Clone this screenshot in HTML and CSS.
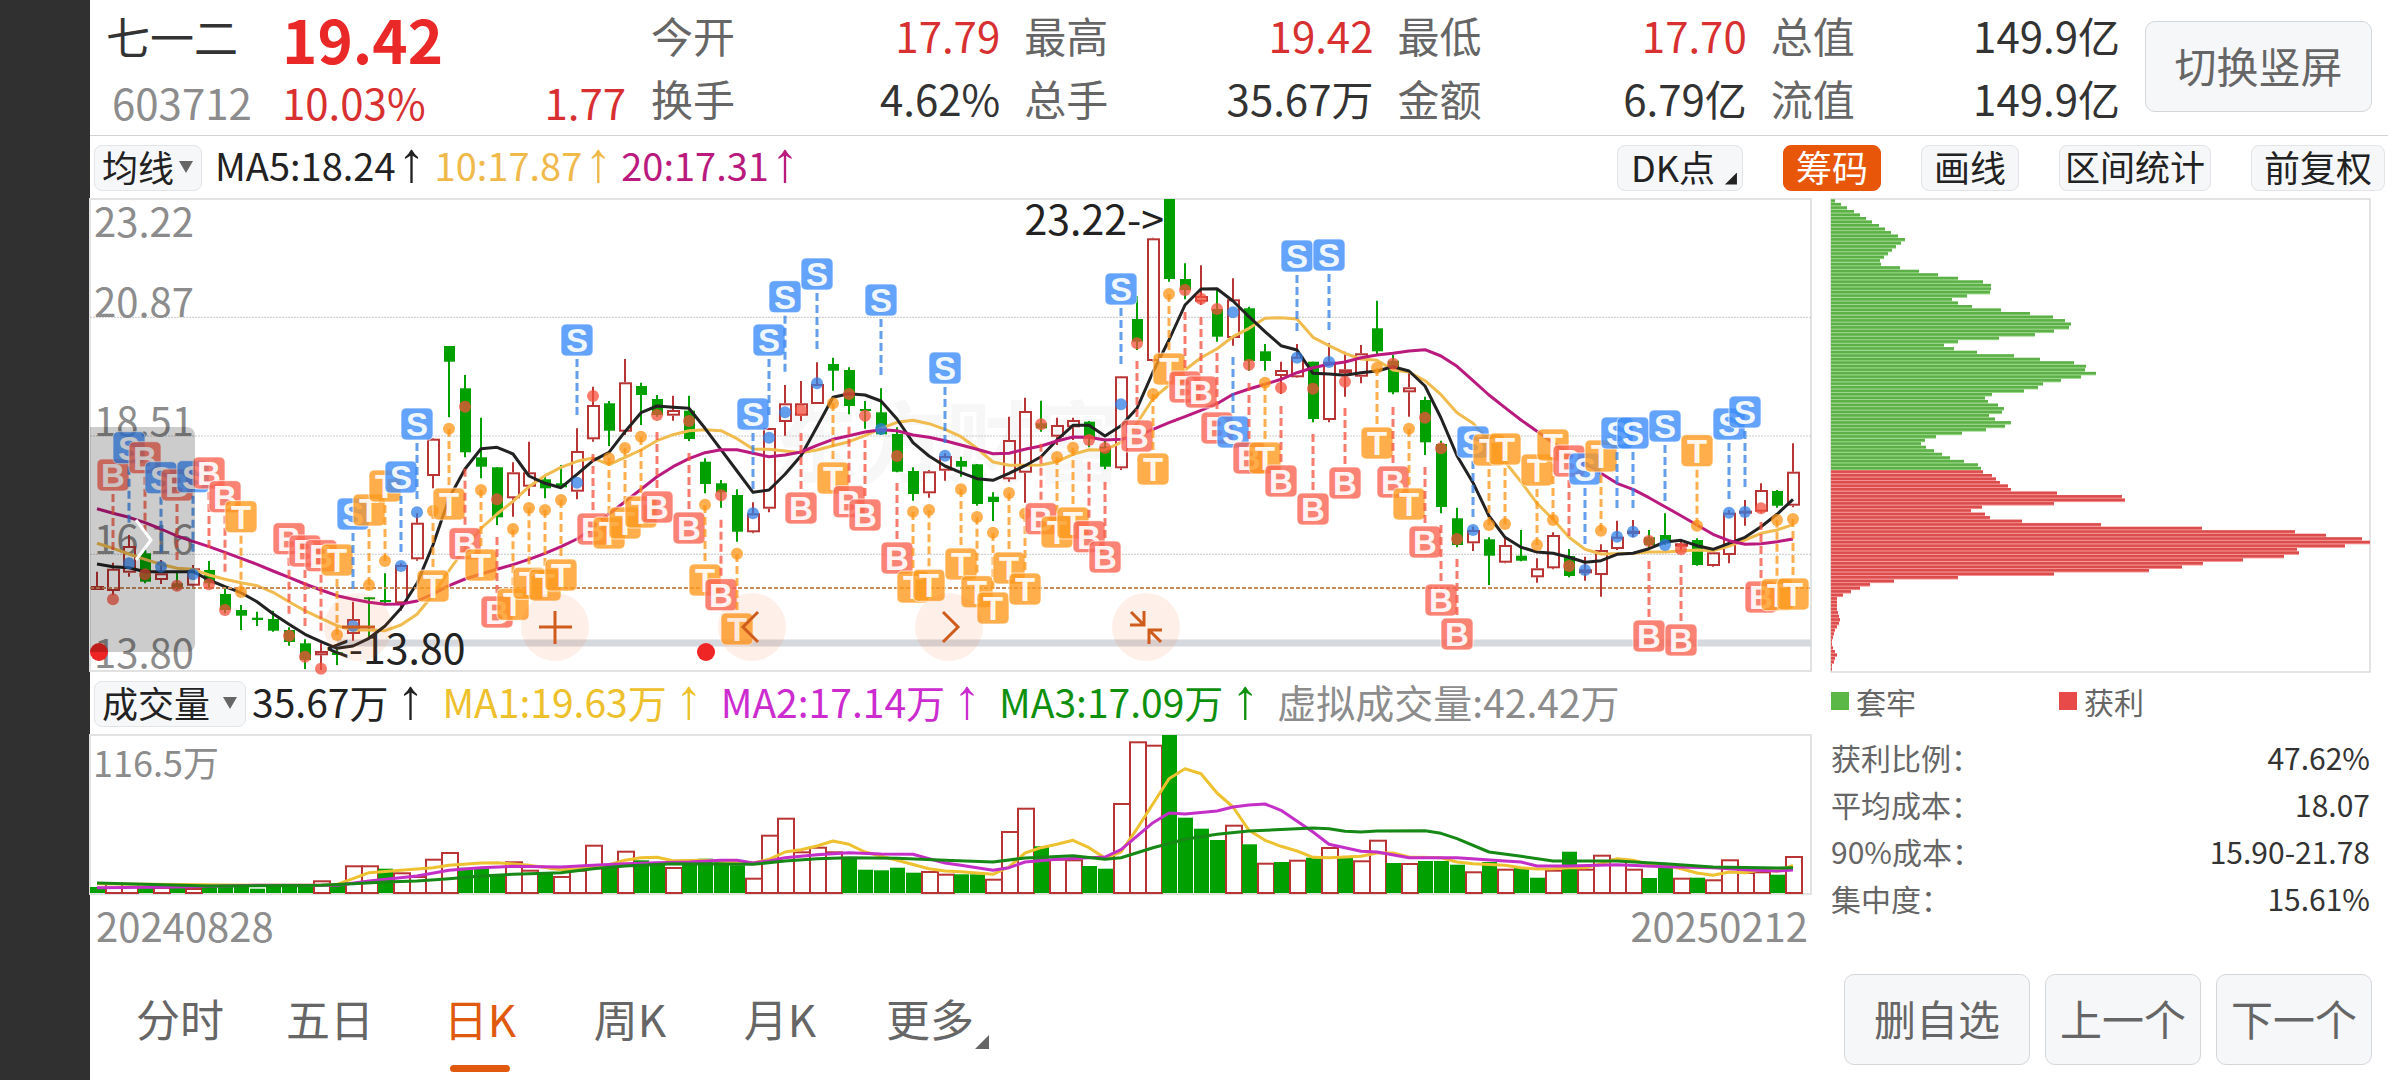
FILE: index.html
```html
<!DOCTYPE html>
<html lang="zh-CN">
<head>
<meta charset="utf-8">
<meta name="viewport" content="width=device-width, initial-scale=1">
<title>七一二 603712</title>
<link rel="stylesheet" href="styles.css">
</head>
<body>
<div class="app">
  <header class="header">
    <div class="identity">
      <h1 class="stock-name">七一二</h1>
      <strong class="price">19.42</strong>
      <span class="stock-code">603712</span>
      <span class="change"><span>10.03%</span><span>1.77</span></span>
    </div>
    <dl class="quotes">
      <div><dt>今开</dt><dd class="up">17.79</dd></div>
      <div><dt>最高</dt><dd class="up">19.42</dd></div>
      <div><dt>最低</dt><dd class="up">17.70</dd></div>
      <div><dt>总值</dt><dd>149.9亿</dd></div>
      <div><dt>换手</dt><dd>4.62%</dd></div>
      <div><dt>总手</dt><dd>35.67万</dd></div>
      <div><dt>金额</dt><dd>6.79亿</dd></div>
      <div><dt>流值</dt><dd>149.9亿</dd></div>
    </dl>
    <button class="big-button" type="button">切换竖屏</button>
  </header>

  <div class="toolbar">
    <span class="picker picker-ma">
      <select aria-label="主图指标"><option>均线</option></select>
    </span>
    <p class="legend-line">
      <span class="ma5">MA5:18.24<i class="arrow">↑</i></span>
      <span class="ma10">10:17.87<i class="arrow">↑</i></span>
      <span class="ma20">20:17.31<i class="arrow">↑</i></span>
    </p>
    <div class="tools">
      <button class="tool tool-corner" type="button">DK点</button>
      <button class="tool tool-active" type="button">筹码</button>
      <button class="tool" type="button">画线</button>
      <button class="tool tool-tight" type="button">区间统计</button>
      <button class="tool" type="button">前复权</button>
    </div>
  </div>

  <main class="board">
    <section class="charts">
      <div class="kline">
        <svg id="kline" class="kline-svg" viewBox="0 0 1722 473" role="img" aria-label="日K线"></svg>
        <button class="drawer" type="button" aria-label="展开">
          <svg viewBox="0 0 20 44" width="20" height="44"><path d="M2 2 17 22 2 42" fill="none" stroke="#fff" stroke-width="3"/></svg>
        </button>
        <div class="controls">
          <button type="button" aria-label="缩小"><svg viewBox="0 0 34 34"><path d="M1 17h33"/></svg></button>
          <button type="button" aria-label="放大"><svg viewBox="0 0 34 34"><path d="M1 17h33M17 1v33"/></svg></button>
          <button type="button" aria-label="左移"><svg viewBox="0 0 34 34"><path d="M23 2 8 17 23 32"/></svg></button>
          <button type="button" aria-label="右移"><svg viewBox="0 0 34 34"><path d="M11 2 26 17 11 32"/></svg></button>
          <button type="button" aria-label="退出全屏"><svg viewBox="0 0 34 34"><path d="M2 2 15 15M1 15h14V1M32 32 20 20M33 20H20v14"/></svg></button>
        </div>
      </div>
      <div class="volume-title">
        <span class="picker picker-vol">
          <select aria-label="副图指标"><option>成交量</option></select>
        </span>
        <p class="legend-line legend-vol">
          <span class="ma5">35.67万<i class="arrow">↑</i></span>
          <span class="vol1">MA1:19.63万<i class="arrow">↑</i></span>
          <span class="vol2">MA2:17.14万<i class="arrow">↑</i></span>
          <span class="vol3">MA3:17.09万<i class="arrow">↑</i></span>
          <span class="muted">虚拟成交量:42.42万</span>
        </p>
      </div>
      <svg id="volume" class="volume-svg" viewBox="0 0 1722 160" role="img" aria-label="成交量"></svg>
      <div class="dates"><time>20240828</time><time>20250212</time></div>
    </section>

    <aside class="chips">
      <svg id="chips" class="chips-svg" viewBox="0 0 539 474" role="img" aria-label="筹码分布"></svg>
      <div class="chips-legend">
        <span class="key key-trapped">套牢</span>
        <span class="key key-profit">获利</span>
      </div>
      <dl class="stats">
        <div><dt>获利比例：</dt><dd>47.62%</dd></div>
        <div><dt>平均成本：</dt><dd>18.07</dd></div>
        <div><dt>90%成本：</dt><dd>15.90-21.78</dd></div>
        <div><dt>集中度：</dt><dd>15.61%</dd></div>
      </dl>
    </aside>
  </main>

  <footer class="footer">
    <nav class="tabs">
      <a href="#fs">分时</a>
      <a href="#d5">五日</a>
      <a href="#dk" class="current" aria-current="page">日K</a>
      <a href="#wk">周K</a>
      <a href="#mk">月K</a>
      <a href="#more" class="more">更多</a>
    </nav>
    <div class="actions">
      <button class="big-button wide" type="button">删自选</button>
      <button class="big-button" type="button">上一个</button>
      <button class="big-button" type="button">下一个</button>
    </div>
  </footer>
</div>
<script src="charts.js"></script>
</body>
</html>
```
FILE: styles.css
```css
* { box-sizing: border-box; }

body {
  margin: 0;
  background: #303030;
  color: #333;
  font-family: "Noto Sans CJK SC", "Noto Sans", sans-serif;
}

h1, p, dl, dd { margin: 0; }
button, select { font-family: inherit; color: inherit; }
svg { display: block; }

.app {
  margin-left: 90px;
  min-height: 100vh;
  background: #fff;
  display: flex;
  flex-direction: column;
}

/* header */
.header {
  display: flex;
  align-items: flex-start;
  gap: 25px;
  height: 136px;
  padding: 0 16px;
  border-bottom: 1px solid #d2d2d2;
}
.identity {
  flex: 0 0 520px;
  display: grid;
  grid-template-columns: 176px 1fr;
  grid-template-rows: 70px 64px;
}
.stock-name { font-size: 44px; line-height: 72px; font-weight: 400; }
.price { font-size: 60px; line-height: 76px; font-weight: 700; color: #eb2828; }
.stock-code { padding-left: 6px; font-size: 42px; line-height: 64px; color: #8c8c8c; }
.change { display: flex; justify-content: space-between; font-size: 42px; line-height: 64px; color: #d83030; }
.quotes {
  flex: 1;
  display: grid;
  grid-template-columns: repeat(4, 1fr);
  column-gap: 24px;
  padding-top: 3px;
  font-size: 42px;
  line-height: 63px;
}
.quotes div { display: flex; justify-content: space-between; }
.quotes dt { color: #666; }
.up { color: #d83030; }

.big-button {
  height: 91px;
  width: 156px;
  padding: 0 0 3px;
  border: 1px solid #d4d7da;
  border-radius: 10px;
  background: #f6f7f9;
  color: #666;
  font-size: 42px;
  line-height: 60px;
}
.header .big-button { width: 227px; margin-top: 21px; }

/* toolbar */
.toolbar { display: flex; align-items: center; height: 63px; padding: 0 3px 0 4px; }
.picker {
  position: relative;
  border: 1px solid #e2e4e7;
  border-radius: 8px;
  background: #f6f7f9;
  height: 46px;
}
.picker-ma { width: 108px; }
.picker-vol { width: 152px; }
.picker select {
  appearance: none;
  width: 100%;
  height: 44px;
  padding: 0 0 4px 7px;
  border: 0;
  background: none;
  color: #222;
  font-size: 36px;
  line-height: 40px;
}
.picker::after {
  content: "";
  position: absolute;
  right: 8px;
  top: 15px;
  border: 7px solid transparent;
  border-top: 12px solid #666;
  border-bottom: 0;
  pointer-events: none;
}
.legend-line {
  display: flex;
  gap: 9px;
  padding: 0 0 6px 13px;
  font-size: 38px;
  line-height: 50px;
  white-space: nowrap;
}
.legend-line .arrow { margin-left: 2px; font: 56px/40px "Liberation Sans", Arial, sans-serif; }
.legend-vol { gap: 18px; padding-left: 6px; font-size: 39px; }
.legend-vol .arrow { margin-left: 8px; }
.ma5 { color: #222; }
.ma10 { color: #f0b94c; }
.ma20 { color: #ba1a7e; }
.vol1 { color: #edc02c; }
.vol2 { color: #cc2ccf; }
.vol3 { color: #0e900e; }
.muted { color: #8c8c8c; }

.tools { display: flex; gap: 40px; margin-left: auto; }
.tool {
  position: relative;
  height: 46px;
  padding: 0 12px 4px;
  border: 1px solid #e2e4e7;
  border-radius: 8px;
  background: #f6f7f9;
  color: #222;
  font-size: 36px;
  line-height: 40px;
}
.tool-active { background: #e8560a; border-color: #e8560a; color: #fff; }
.tool-tight { padding: 0 5px 4px; font-size: 35px; }
.tool-corner { padding: 0 27px 4px 13px; }
.tool-corner::after, .more::after {
  content: "";
  position: absolute;
  right: 5px;
  bottom: 5px;
  width: 12px;
  height: 12px;
  background: #222;
  clip-path: polygon(100% 0, 100% 100%, 0 100%);
}

/* charts */
.board { display: grid; grid-template-columns: minmax(0, 1722fr) minmax(0, 576fr); }
.kline { position: relative; }
.kline-svg, .volume-svg, .chips-svg { width: 100%; height: auto; overflow: visible; }
.drawer {
  position: absolute;
  left: 0;
  top: 228px;
  width: 105px;
  height: 225px;
  padding: 0 0 0 44px;
  border: 0;
  border-radius: 0 8px 8px 0;
  background: rgba(0, 0, 0, .2);
}
.controls { position: absolute; left: 234px; bottom: 11px; display: flex; gap: 129px; }
.controls button {
  display: grid;
  place-items: center;
  width: 68px;
  height: 68px;
  padding: 0;
  border: 0;
  border-radius: 50%;
  background: rgba(250, 110, 40, .1);
}
.controls svg { width: 34px; height: 34px; fill: none; stroke: #cf5c1c; stroke-width: 3; }
.volume-title { display: flex; align-items: center; height: 63px; padding-left: 4px; }
.dates { display: flex; justify-content: space-between; padding: 2px 4px 0 6px; font-size: 40px; line-height: 56px; color: #8c8c8c; }

.axis { font-size: 40px; fill: #8c8c8c; }
.axis-vol { font-size: 36px; fill: #8c8c8c; }
.mark { font-size: 41px; fill: #222; }
.watermark { font-size: 88px; font-weight: 700; fill: #f7f7f7; }
.badge-text { font: 700 33px "Liberation Sans", Arial, sans-serif; fill: #fff; text-anchor: middle; }

/* chip distribution */
.chips { padding: 0 18px 0 19px; }
.chips-legend { display: grid; grid-template-columns: 228px 1fr; padding-top: 5px; font-size: 30px; line-height: 46px; color: #666; }
.key { display: flex; align-items: center; gap: 7px; }
.key::before { content: ""; width: 18px; height: 18px; background: #5cb846; }
.key-profit::before { background: #e84a4a; }
.stats { padding-top: 10px; font-size: 30px; line-height: 47px; }
.stats div { display: flex; justify-content: space-between; }
.stats dt { color: #666; }

/* footer */
.footer { display: flex; justify-content: space-between; margin-top: auto; padding: 0 16px 14px 15px; height: 106px; }
.tabs { display: flex; }
.tabs a {
  position: relative;
  width: 150px;
  color: #666;
  text-align: center;
  text-decoration: none;
  font-size: 44px;
  line-height: 88px;
}
.tabs .current { color: #e0590f; }
.current::after {
  content: "";
  position: absolute;
  left: 45px;
  bottom: -6px;
  width: 60px;
  height: 7px;
  border-radius: 4px;
  background: #e0590f;
}
.more::after { right: 16px; bottom: 17px; width: 14px; height: 14px; background: #666; }
.actions { display: flex; gap: 15px; }
.actions .wide { width: 186px; }
```
FILE: charts.js
```js
var RED = '#b93434', GREEN = '#00a000';

// Rows: direction, high, body top, body bottom, low (thirds of a unit, offset 27)
var candles = 'r1145,1188,1200,1200 r1118,1136,1203,1215 r1035,1068,1148,1160 g1080,1090,1175,1180 r1110,1150,1170,1182 g1145,1180,1196,1200 r1125,1135,1187,1190 g1113,1140,1180,1195 g1195,1212,1260,1270 g1245,1260,1277,1320 g1265,1283,1290,1308 g1262,1287,1322,1325 g1312,1320,1356,1367 g1348,1360,1410,1437 r1360,1383,1396,1440 g1375,1387,1395,1425 r1235,1287,1332,1352 g1222,1222,1228,1338 g1150,1230,1235,1240 r1120,1125,1240,1262 r970,998,1108,1112 r745,746,858,895 g468,468,515,682 g555,595,787,802 g683,802,830,865 g832,832,982,1005 r817,847,925,980 r755,847,890,918 g855,868,895,925 g825,880,892,895 r715,783,905,928 r590,645,748,755 g633,640,722,768 r507,577,725,735 g578,588,615,705 g615,627,675,680 r617,660,677,692 g617,662,747,753 g805,815,882,910 g870,880,907,953 g898,915,1025,1055 r937,970,1027,1030 r713,714,956,967 r585,640,696,737 r573,640,677,693 r517,582,642,642 g503,522,542,602 g532,540,648,673 g633,657,662,716 g595,667,733,735 g712,732,845,847 g832,843,912,932 r840,844,910,923 r790,798,842,872 g800,813,830,860 g822,823,942,947 g907,920,936,993 r680,750,868,875 r623,663,848,938 g632,700,715,725 r683,705,740,765 r683,690,712,750 g693,695,745,772 g750,770,830,838 r558,559,835,840 g318,387,455,480 r143,145,513,515 g27,27,267,275 g220,267,300,328 r226,318,335,345 g300,357,440,455 r265,328,444,467 g350,355,513,542 g462,484,513,542 r515,540,558,612 r462,500,562,563 g515,515,687,697 r460,515,690,697 r485,538,550,620 r465,490,560,580 g332,415,484,495 g495,512,607,613 r545,592,607,680 g620,630,757,795 g752,762,951,970 g953,985,1065,1072 r1010,1020,1060,1083 g1042,1048,1097,1185 r1040,1065,1118,1120 g1020,1097,1112,1114 r1105,1135,1162,1178 r1027,1035,1135,1138 g1077,1098,1158,1162 r1100,1138,1150,1172 r1063,1080,1155,1220 r992,1040,1077,1080 r990,1022,1032,1042 g1020,1042,1065,1075 g970,1035,1060,1065 r1047,1060,1070,1087 g1045,1050,1125,1127 r1075,1087,1128,1130 r960,968,1095,1120 r930,962,968,1007 r880,900,965,968 g900,903,947,953 r760,845,947,952';

// Trade signals: kind, bar index, badge centre, dot centre
var signals = 'B1,855,1228 S2,773,1120 B3,803,1153 S4,863,1130 B5,885,1187 S6,860,1153 B7,849,1183 B8,920,1260 T9,980,1206 B12,1046,1337 B13,1083,1400 B14,1097,1436 T15,1110,1335 S16,972,1308 T17,960,1185 T18,888,1113 S19,861,1128 S20,702,967 T21,1188,963 T22,942,716 B23,1061,650 T24,1125,900 B25,1266,928 T26,1243,1017 T27,1180,954 T28,1185,960 T29,1155,930 S30,450,878 B31,1017,618 T32,1029,805 T33,999,774 T34,966,740 B35,951,675 B37,1014,693 T38,1170,944 B39,1214,916 T40,1317,1091 S41,672,970 S42,450,743 S43,320,667 B44,954,661 S45,252,580 T46,864,640 B47,935,612 B48,975,677 S49,330,717 B50,1104,798 T51,1191,965 T52,1186,960 S53,534,797 T54,1122,898 T55,1205,981 T56,1254,1028 T57,1134,909 T58,1197,971 B59,986,703 T60,1026,801 T61,999,773 B62,1040,750 B63,1101,774 S64,297,643 B65,738,460 T66,837,612 T67,537,312 B68,591,300 B69,606,326 B70,714,357 S71,726,367 B72,804,524 T73,804,578 B74,873,593 S75,198,503 B76,957,596 S77,195,516 B78,879,575 T80,759,533 B81,876,521 T82,942,716 B83,1056,683 B84,1230,775 B85,1332,1047 S86,756,1020 T87,780,1005 T88,777,1002 T90,840,1065 T91,765,990 B92,813,1128 S93,837,1140 T94,798,1022 S95,729,1040 S96,729,1025 B97,1338,1053 S98,708,1065 B99,1350,1078 T100,782,1007 S102,702,968 S103,666,966 B104,1221,955 T105,1214,990 T106,1212,987';

var ma5 = [1122,1130,1133,1145,1145,1145,1145,1170,1190,1208,1235,1271,1303,1333,1355,1375,1368,1345,1308,1255,1180,1065,925,837,776,772,792,858,880,893,853,812,787,725,668,648,652,655,715,779,843,907,900,853,797,710,622,611,615,633,687,758,798,828,848,866,871,850,827,800,750,706,706,738,707,655,546,450,345,297,296,333,380,425,467,480,550,552,556,548,543,530,543,588,684,797,878,978,1042,1072,1086,1090,1102,1117,1112,1093,1090,1076,1056,1051,1067,1078,1060,1042,1010,973,928];
var ma10 = [1060,1075,1092,1108,1123,1135,1138,1155,1168,1178,1187,1207,1235,1262,1285,1307,1320,1320,1322,1305,1273,1215,1142,1075,1015,972,934,890,857,832,814,804,824,802,780,752,734,722,719,722,746,777,778,783,788,780,767,755,737,715,697,691,701,718,740,775,816,826,826,825,815,793,779,780,757,700,626,585,540,503,476,440,415,385,383,387,442,467,490,507,511,540,546,572,614,668,700,752,815,875,940,988,1042,1078,1092,1091,1090,1086,1086,1083,1080,1082,1068,1050,1030,1020,1004];
var ma20 = [956,970,982,998,1017,1038,1054,1070,1087,1105,1123,1143,1162,1182,1200,1217,1228,1237,1243,1242,1233,1212,1187,1167,1152,1138,1124,1108,1090,1070,1047,1014,972,935,898,860,830,806,788,779,779,790,800,795,786,766,748,737,726,719,722,735,742,752,765,778,791,790,778,768,753,741,742,750,748,738,718,698,680,661,641,613,597,583,568,548,533,523,516,503,495,490,483,479,498,529,572,615,653,690,724,758,790,820,850,880,898,923,950,977,1005,1033,1052,1063,1061,1055,1047];

var volumes = 'g655 r643 r643 g655 r655 g655 r658 g655 g652 g652 g660 g655 g655 g648 r635 g650 r590 r590 g600 r611 r622 r570 r550 g597 g595 g618 r578 r603 g612 r622 r603 r528 g590 r546 g575 g585 r595 g582 g570 g580 g590 r627 r498 r447 r548 r534 r548 g565 g603 g605 g597 g612 r607 r615 g617 g617 r630 r487 r417 g533 r570 r572 g592 g600 r403 r218 r228 g199 g447 g480 g514 r468 g527 r582 g580 r573 g567 r535 g565 r575 r513 g583 r583 g577 g577 g588 r608 g580 r600 g597 g627 r603 g549 r600 r558 r570 r600 g628 g597 r627 g627 r632 r572 r610 r608 g618 r562';

// Sparse volume averages: bar index, height
var volAvg = [
  ['#edc12f', '0,645 10,650 14,650 15,647 16,630 17,612 19,605 21,597 22,590 24,583 25,582 27,590 29,603 30,600 32,588 33,575 34,567 35,566 36,576 38,575 40,580 41,583 42,572 43,550 44,543 45,532 46,517 47,527 48,550 50,575 52,600 53,607 54,609 55,613 56,617 57,595 58,553 59,537 60,527 61,515 62,537 63,568 64,550 65,480 66,405 67,330 68,300 69,315 70,373 71,415 72,485 73,515 74,533 75,547 76,566 77,567 78,565 79,563 80,553 81,553 82,565 84,567 85,580 86,585 88,590 89,597 90,601 91,600 92,597 93,597 94,585 95,570 96,575 97,587 98,590 99,600 100,613 101,620 102,610 103,612 104,603 105,608 106,590'],
  ['#c42fc8', '0,657 5,655 10,650 15,650 17,637 20,622 22,605 24,597 26,593 29,595 31,590 33,585 35,582 37,580 39,575 40,575 41,583 42,577 43,567 45,558 47,552 49,556 51,557 52,570 53,583 54,590 55,597 56,605 57,597 58,580 60,572 63,565 64,543 66,462 67,433 68,436 70,427 71,415 72,409 73,406 74,425 76,490 77,527 79,548 80,550 82,567 85,567 88,577 89,580 90,592 92,592 95,588 98,594 101,597 103,603 105,607 106,604'],
  ['#168816', '0,643 7,652 14,650 16,645 18,640 20,637 22,630 24,622 26,617 29,612 31,600 33,592 36,585 41,587 43,577 45,570 47,567 50,569 53,575 56,580 58,568 61,561 63,572 64,567 66,537 68,512 70,497 72,487 76,478 77,480 78,488 79,490 80,487 83,486 84,494 85,510 87,550 89,563 91,577 95,577 98,585 101,595 105,598 106,597']
];

// Chip counts per price level, highest price first
var chipRows = [11,28,44,62,79,96,112,129,147,164,181,200,190,177,166,156,144,132,137,186,240,291,346,412,435,434,432,370,329,345,382,461,539,602,636,652,645,605,555,457,346,307,335,396,496,566,659,693,690,719,679,624,576,563,524,436,418,427,454,469,465,429,446,488,472,420,355,286,256,245,259,280,302,324,361,400,407,413,437,449,459,481,488,614,790,798,604,411,381,419,431,519,732,1006,1260,1344,1440,1463,1394,1264,1271,1230,1117,1009,954,863,606,344,171,107,79,55,33,16,15,15,17,20,23,24,22,15,11,9,6,4,3,6,12,16,12,8,4,2];
var TRAPPED = 77;

function cx(i) { return 7 + 16 * i; }
function py(v) { return Math.round((v / 3 - 9) * 10) / 10; }
function vy(v) { return Math.round((v - 199) / 3 * 10) / 10; }
function line(x1, y1, x2, y2, stroke, w, extra) {
  return '<line x1="' + x1 + '" y1="' + y1 + '" x2="' + x2 + '" y2="' + y2 + '" stroke="' + stroke + '" stroke-width="' + w + '" ' + (extra || '') + '/>';
}
function rect(x, y, w, h, attrs) {
  return '<rect x="' + x + '" y="' + y + '" width="' + w + '" height="' + h + '" ' + attrs + '/>';
}
function text(x, y, cls, s, extra) {
  return '<text x="' + x + '" y="' + y + '" class="' + cls + '" ' + (extra || '') + '>' + s + '</text>';
}
function poly(points, stroke, w) {
  return '<polyline points="' + points.join(' ') + '" fill="none" stroke="' + stroke + '" stroke-width="' + w + '" stroke-linejoin="round"/>';
}

function drawKline() {
  var out = rect(0, 0, 1721, 472, 'fill="none" stroke="#e2e2e2" stroke-width="2"');
  out += text(680, 276, 'watermark', '东方财富');
  [382, 738, 1093].forEach(function (v) {
    out += line(0, py(v), 1721, py(v), '#c8c8c8', 1, 'stroke-dasharray="2 1"');
  });
  out += line(247, 444, 1721, 444, '#d5d8dd', 7);
  [['23.22', 38], ['20.87', 118], ['18.51', 237], ['16.16', 355], ['13.80', 469]].forEach(function (a) {
    out += text(4, a[1], 'axis', a[0]);
  });
  candles.split(' ').forEach(function (c, i) {
    var v = c.slice(1).split(',').map(function (n) { return py(+n); });
    var x = cx(i);
    if (c[0] === 'g') {
      out += line(x, v[0], x, v[3], GREEN, 2) + rect(x - 5, v[1], 11, Math.max(2, v[2] - v[1]), 'fill="' + GREEN + '"');
    } else {
      out += line(x, v[0], x, v[1], RED, 2) + line(x, v[2], x, v[3], RED, 2);
      out += rect(x - 5, v[1] + 1, 11, Math.max(1, v[2] - v[1] - 2), 'fill="none" stroke="' + RED + '" stroke-width="2"');
    }
  });
  [[ma10, '#f0bc50'], [ma5, '#222'], [ma20, '#ba1a7e']].forEach(function (m) {
    out += poly(m[0].map(function (v, i) { return cx(i) + ',' + py(v); }), m[1], 3);
  });
  out += line(0, py(1194), 1721, py(1194), '#c98a5a', 2, 'stroke-dasharray="4 2"');
  out += text(1074, 36, 'mark', '23.22-&gt;', 'text-anchor="end"');
  out += text(236, 465, 'mark', '&lt;-13.80');
  out += '<circle cx="9" cy="453" r="9" fill="#ef2424"/><circle cx="616" cy="453" r="9" fill="#ef2424"/>';

  var colors = { B: ['#f5503c', '#fa6452'], S: ['#2f7fe6', '#3d8cfb'], T: ['#ff9416', '#ff9a1e'] };
  signals.split(' ').forEach(function (s) {
    var v = s.slice(1).split(','), x = cx(+v[0]), b = +v[1], d = +v[2], k = d > b ? 1 : -1, c = colors[s[0]];
    out += line(x, py(b + 57 * k), x, py(b + 225 * k), c[0], 3, 'stroke-dasharray="8 4" stroke-opacity=".75"');
    out += '<circle cx="' + x + '" cy="' + py(d) + '" r="6" fill="' + c[0] + '" fill-opacity=".75"/>';
    out += rect(x - 16, py(b) - 16, 32, 32, 'rx="5" fill="' + c[1] + '" fill-opacity=".8" stroke="#fff" stroke-opacity=".7" stroke-width="1"');
    out += text(x, py(b) + 12, 'badge-text', s[0], 'fill-opacity=".92"');
  });
  document.getElementById('kline').innerHTML = out;
}

function drawVolume() {
  var out = rect(0, 0, 1721, 159, 'fill="none" stroke="#e2e2e2" stroke-width="2"');
  out += text(3, 42, 'axis-vol', '116.5万');
  volumes.split(' ').forEach(function (b, i) {
    var y = vy(+b.slice(1)), x = cx(i);
    if (b[0] === 'g') out += rect(x - 7, y, 15, 158 - y, 'fill="' + GREEN + '"');
    else out += rect(x - 7, y + 1, 16, 157 - y, 'fill="#fff" stroke="' + RED + '" stroke-width="2"');
  });
  volAvg.forEach(function (m) {
    out += poly(m[1].split(' ').map(function (p) {
      p = p.split(',');
      return cx(+p[0]) + ',' + vy(+p[1]);
    }), m[0], 3);
  });
  document.getElementById('volume').innerHTML = out;
}

function drawChips() {
  var out = rect(0, 0, 539, 473, 'fill="none" stroke="#c8c8c8" stroke-width="1"');
  chipRows.forEach(function (n, i) {
    var w = Math.round(n / 1463 * 539), y = Math.round((0.4 + 3.52 * i) * 10) / 10, trapped = i < TRAPPED;
    out += rect(0, y, w, 3.5, 'fill="' + (trapped ? '#9bd98a' : '#f79090') + '"');
    out += rect(0, y, w, 2.5, 'fill="' + (trapped ? '#5cb047' : '#db4c4c') + '"');
  });
  document.getElementById('chips').innerHTML = out;
}

drawKline();
drawVolume();
drawChips();
```
